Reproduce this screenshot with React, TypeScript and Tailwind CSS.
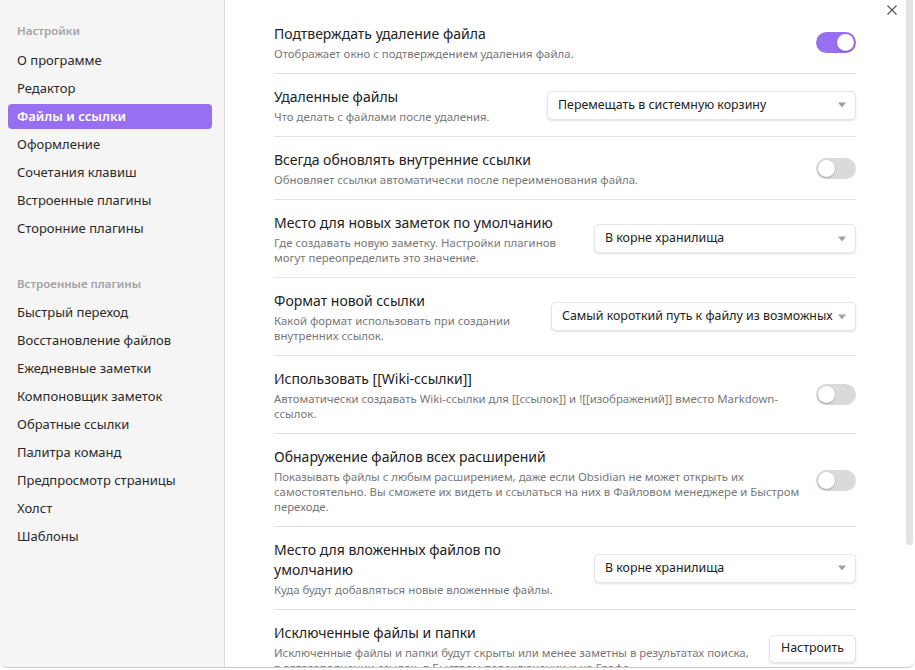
import clsx from "clsx";

const CORE = ["О программе", "Редактор", "Файлы и ссылки", "Оформление", "Сочетания клавиш", "Встроенные плагины", "Сторонние плагины"];
const PLUGINS = ["Быстрый переход", "Восстановление файлов", "Ежедневные заметки", "Компоновщик заметок", "Обратные ссылки", "Палитра команд", "Предпросмотр страницы", "Холст", "Шаблоны"];

function Toggle({ on }: { on?: boolean }) {
  return (
    <div className={clsx("flex h-[21px] w-[40px] shrink-0 items-center rounded-full p-[2px]", on ? "justify-end bg-[#976ff0]" : "justify-start bg-[#dadada]")}>
      <div className="h-[17px] w-[17px] rounded-full bg-white shadow-[0_1px_2px_rgba(0,0,0,0.25)]" />
    </div>
  );
}

function Dropdown({ value, width }: { value: string; width: string }) {
  return (
    <div className={clsx("flex h-[29px] shrink-0 items-center justify-between rounded-[5px] border border-[#e6e6e6] bg-white pl-[10px] pr-[8px] text-[12.4px] text-[#222] shadow-[0_1px_2px_rgba(0,0,0,0.12)]", width)}>
      <span className="whitespace-nowrap">{value}</span>
      <svg width="10" height="6" viewBox="0 0 10 6" className="ml-1 shrink-0">
        <path d="M1 0.5h8L5 5.5z" fill="#a0a0a0" />
      </svg>
    </div>
  );
}

function Row({ title, desc, children }: { title: React.ReactNode; desc: React.ReactNode; children: React.ReactNode }) {
  return (
    <div className="flex items-center border-b border-[#e3e3e3] py-[12.5px]">
      <div className="mr-4 flex-1">
        <div className="text-[14px] leading-[20px] text-[#222]">{title}</div>
        <div className="mt-[2px] text-[11.4px] leading-[15px] text-[#777]">{desc}</div>
      </div>
      {children}
    </div>
  );
}

function NavItem({ label, active }: { label: string; active?: boolean }) {
  return (
    <div className={clsx("mb-[3px] ml-2 mr-3 flex h-[25px] items-center rounded-[4px] px-[9px] text-[13px]", active ? "bg-[#976ff0] font-semibold text-white" : "text-[#2a2a2a]")}>
      {label}
    </div>
  );
}

export default function App() {
  return (
    <div className="h-[670px] w-[915px] overflow-hidden bg-white font-['Noto_Sans',sans-serif]">
      <div className="flex h-[668px] overflow-hidden rounded-b-[8px] border-b border-[#c9c9c9]">
        <aside className="w-[225px] shrink-0 border-r border-[#dcdcdc] bg-[#f5f5f5] pt-[22px]">
          <div className="mb-[9px] px-[17px] text-[11.5px] font-semibold text-[#a3a3a3]">Настройки</div>
          {CORE.map((c) => (
            <NavItem key={c} label={c} active={c === "Файлы и ссылки"} />
          ))}
          <div className="mb-[8px] mt-[34px] px-[17px] text-[11.5px] font-semibold text-[#a3a3a3]">Встроенные плагины</div>
          {PLUGINS.map((p) => (
            <NavItem key={p} label={p} />
          ))}
        </aside>

        <main className="flex flex-1">
          <div className="flex-1 pl-[49px] pr-[50px] pt-[11px]">
            <Row title="Подтверждать удаление файла" desc="Отображает окно с подтверждением удаления файла.">
              <Toggle on />
            </Row>
            <Row title="Удаленные файлы" desc="Что делать с файлами после удаления.">
              <Dropdown value="Перемещать в системную корзину" width="w-[309px]" />
            </Row>
            <Row title="Всегда обновлять внутренние ссылки" desc="Обновляет ссылки автоматически после переименования файла.">
              <Toggle />
            </Row>
            <Row title="Место для новых заметок по умолчанию" desc="Где создавать новую заметку. Настройки плагинов могут переопределить это значение.">
              <Dropdown value="В корне хранилища" width="w-[262px]" />
            </Row>
            <Row title="Формат новой ссылки" desc="Какой формат использовать при создании внутренних ссылок.">
              <Dropdown value="Самый короткий путь к файлу из возможных" width="w-[305px]" />
            </Row>
            <Row title="Использовать [[Wiki-ссылки]]" desc="Автоматически создавать Wiki-ссылки для [[ссылок]] и ![[изображений]] вместо Markdown-ссылок.">
              <Toggle />
            </Row>
            <Row title="Обнаружение файлов всех расширений" desc="Показывать файлы с любым расширением, даже если Obsidian не может открыть их самостоятельно. Вы сможете их видеть и ссылаться на них в Файловом менеджере и Быстром переходе.">
              <Toggle />
            </Row>
            <Row title="Место для вложенных файлов по умолчанию" desc="Куда будут добавляться новые вложенные файлы.">
              <Dropdown value="В корне хранилища" width="w-[262px]" />
            </Row>
            <Row title="Исключенные файлы и папки" desc="Исключенные файлы и папки будут скрыты или менее заметны в результатах поиска, в автозаполнении ссылок, в Быстром переключении и на Графе.">
              <button className="h-[28px] shrink-0 rounded-[5px] border border-[#e3e3e3] bg-white px-[11px] text-[12.4px] text-[#222] shadow-[0_1px_2px_rgba(0,0,0,0.12)]">
                Настроить
              </button>
            </Row>
          </div>
          <div className="relative flex w-[9px] flex-col">
            <svg width="12" height="12" viewBox="0 0 12 12" className="absolute right-[17px] top-[4px]">
              <path d="M1.5 1.5l9 9M10.5 1.5l-9 9" stroke="#5c5c5c" strokeWidth="1.3" />
            </svg>
            <div className="h-[545px] w-[7px] rounded-b-[4px] bg-[#e3e3e3]" />
          </div>
        </main>
      </div>
    </div>
  );
}
